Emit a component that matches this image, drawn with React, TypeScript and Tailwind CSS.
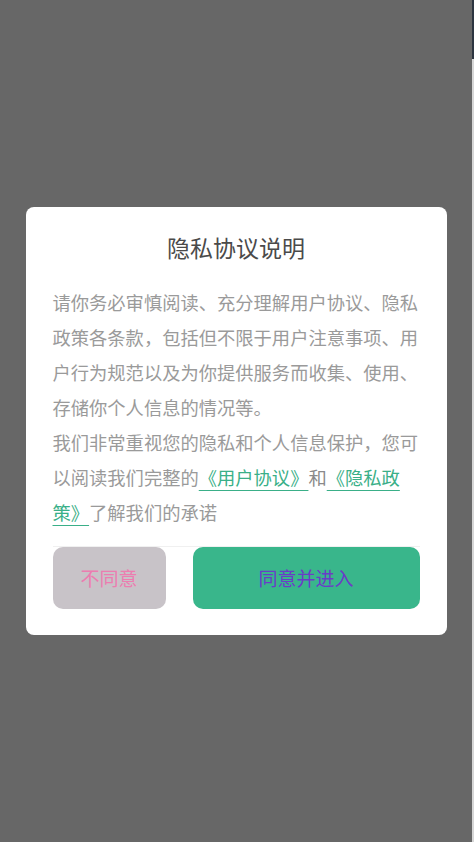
import React from 'react';

const linkClass = 'text-[#3aaf88] underline underline-offset-[5px] decoration-[1px]';

const App: React.FC = () => {
  return (
    <div
      className="relative w-[474px] h-[842px] overflow-hidden bg-[#d6d6d6]"
      style={{ fontFamily: '"Noto Sans CJK SC", "Noto Sans", sans-serif' }}
    >
      {/* page underneath, only a thin edge shows */}
      <div className="h-[59px] bg-[#2c3440]" />

      {/* Mask */}
      <div className="absolute top-0 left-0 bottom-0 right-[2px] bg-[#676767] flex items-center justify-center">
        <div className="w-[421px] bg-white rounded-[8px] px-[27px] pt-[23px] pb-[26px]">
          <h2 className="text-center text-[23px] leading-[34px] text-[#4a4a4a]">隐私协议说明</h2>
          <div className="mt-[21px] text-[18.3px] leading-[35px] text-[#9a9a9a]">
            <p>请你务必审慎阅读、充分理解用户协议、隐私政策各条款，包括但不限于用户注意事项、用户行为规范以及为你提供服务而收集、使用、存储你个人信息的情况等。</p>
            <p>
              我们非常重视您的隐私和个人信息保护，您可以阅读我们完整的
              <span className={linkClass}>《用户协议》</span>
              <span className="text-[#8a8a8a]">和</span>
              <span className={linkClass}>《隐私政策》</span>
              了解我们的承诺
            </p>
          </div>
          <div className="mt-[16px] border-t border-[#f0f0f0] flex gap-[27px]">
            <button className="w-[113px] h-[62px] rounded-[10px] bg-[#c8c3c8] text-[#ec7db0] text-[19px]">
              不同意
            </button>
            <button className="flex-1 h-[62px] rounded-[10px] bg-[#39b68b] text-[#6a3cc8] text-[19px]">
              同意并进入
            </button>
          </div>
        </div>
      </div>
    </div>
  );
};

export default App;
